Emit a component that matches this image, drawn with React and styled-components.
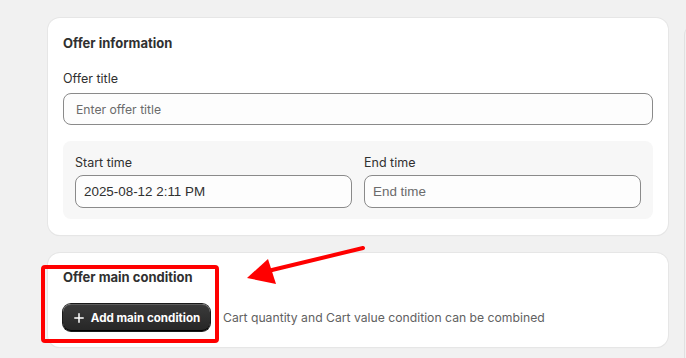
import React from "react";
import styled, { createGlobalStyle } from "styled-components";

const Global = createGlobalStyle`
  html, body { margin: 0; padding: 0; background: #f1f1f1; }
  body { font-family: "Inter", "Noto Sans", sans-serif; color: #303030; }
  * { box-sizing: border-box; }
`;

const Page = styled.div`
  position: relative;
  width: 686px;
  height: 358px;
  overflow: hidden;
  display: flex;
  align-items: flex-start;
  gap: 16px;
  padding: 18px 0 0 48px;
`;

const Main = styled.div`
  width: 620px;
  display: flex;
  flex-direction: column;
  gap: 18px;
  flex-shrink: 0;
`;

const Side = styled.div`
  width: 40px;
  height: 400px;
  margin-top: 7px;
  border-left: 1px solid #e1e1e1;
  border-top-left-radius: 10px;
  background: #f1f1f1;
  flex-shrink: 0;
`;

const Card = styled.div`
  background: #fff;
  border-radius: 12px;
  box-shadow: 0 0 0 1px #e6e6e6, 0 1px 1px rgba(0, 0, 0, 0.08);
  padding: ${(p) => p.$pad || "15px 15px 16px"};
  display: flex;
  flex-direction: column;
`;

const Title = styled.h2`
  margin: 0;
  font-size: 13px;
  line-height: 20px;
  height: 20px;
  font-weight: 650;
  color: #303030;
`;

const Label = styled.label`
  display: block;
  font-size: 12.5px;
  line-height: 18px;
  height: 18px;
  color: #303030;
  margin-bottom: ${(p) => p.$mb || "5px"};
`;

const Field = styled.div`
  display: flex;
  flex-direction: column;
  margin-top: ${(p) => p.$mt || "0"};
`;

const TextInput = styled.input`
  height: ${(p) => p.$h || "32px"};
  width: 100%;
  border: 1px solid #8a8a8a;
  border-radius: 8px;
  background: #fdfdfd;
  padding: 0 ${(p) => p.$px || "12px"};
  font-family: ${(p) => (p.$arial ? '"Liberation Sans", Arial, sans-serif' : '"Inter", "Noto Sans", sans-serif')};
  font-size: ${(p) => (p.$arial ? "13.4px" : "12.2px")};
  color: #303030;
  outline: none;
  &::placeholder { color: #6b6b6b; }
`;

const TimeBox = styled.div`
  margin-top: 16px;
  background: #f7f7f7;
  border-radius: 8px;
  padding: 13px 12px 11px;
  display: grid;
  grid-template-columns: 1fr 1fr;
  gap: 12px;
`;

const ActionRow = styled.div`
  display: flex;
  align-items: center;
  gap: 13px;
  margin-top: 17px;
`;

const DarkButton = styled.button`
  height: 27px;
  width: 147px;
  border: none;
  border-radius: 8px;
  background: linear-gradient(#3b3b3b, #262626);
  box-shadow: inset 0 -1px 0 #000, inset 0 1px 0 rgba(255,255,255,0.18), 0 0 0 1px #1a1a1a;
  color: #fff;
  font-family: "Inter", "Noto Sans", sans-serif;
  font-size: 11.6px;
  font-weight: 650;
  display: flex;
  align-items: center;
  justify-content: center;
  gap: 7px;
  padding: 0 0 0 1px;
`;

const Helper = styled.span`
  font-size: 12.2px;
  color: #616161;
`;

const Overlay = styled.svg`
  position: absolute;
  left: 0;
  top: 0;
  pointer-events: none;
`;

export default function App() {
  return (
    <>
      <Global />
      <Page>
        <Main>
          <Card>
            <Title>Offer information</Title>
            <Field $mt="17px">
              <Label>Offer title</Label>
              <TextInput placeholder="Enter offer title" />
            </Field>
            <TimeBox>
              <Field>
                <Label $mb="3px">Start time</Label>
                <TextInput $arial $h="33px" $px="8px" defaultValue="2025-08-12 2:11 PM" />
              </Field>
              <Field>
                <Label $mb="3px">End time</Label>
                <TextInput $arial $h="33px" $px="8px" placeholder="End time" />
              </Field>
            </TimeBox>
          </Card>
          <Card $pad="14px 15px 16px">
            <Title>Offer main condition</Title>
            <ActionRow>
              <DarkButton>
                <svg width="10" height="10" viewBox="0 0 10 10">
                  <path d="M5 0.8v8.4M0.8 5h8.4" stroke="#fff" strokeWidth="1.5" strokeLinecap="round" />
                </svg>
                Add main condition
              </DarkButton>
              <Helper>Cart quantity and Cart value condition can be combined</Helper>
            </ActionRow>
          </Card>
        </Main>
        <Side />
        <Overlay width="686" height="358">
          <rect x="43" y="267" width="174" height="74" rx="2" fill="none" stroke="#ff0000" strokeWidth="4" />
          <line x1="363" y1="248" x2="272" y2="270" stroke="#ff0000" strokeWidth="4" strokeLinecap="round" />
          <polygon points="247,278 268,259 276,284" fill="#ff0000" />
        </Overlay>
      </Page>
    </>
  );
}
